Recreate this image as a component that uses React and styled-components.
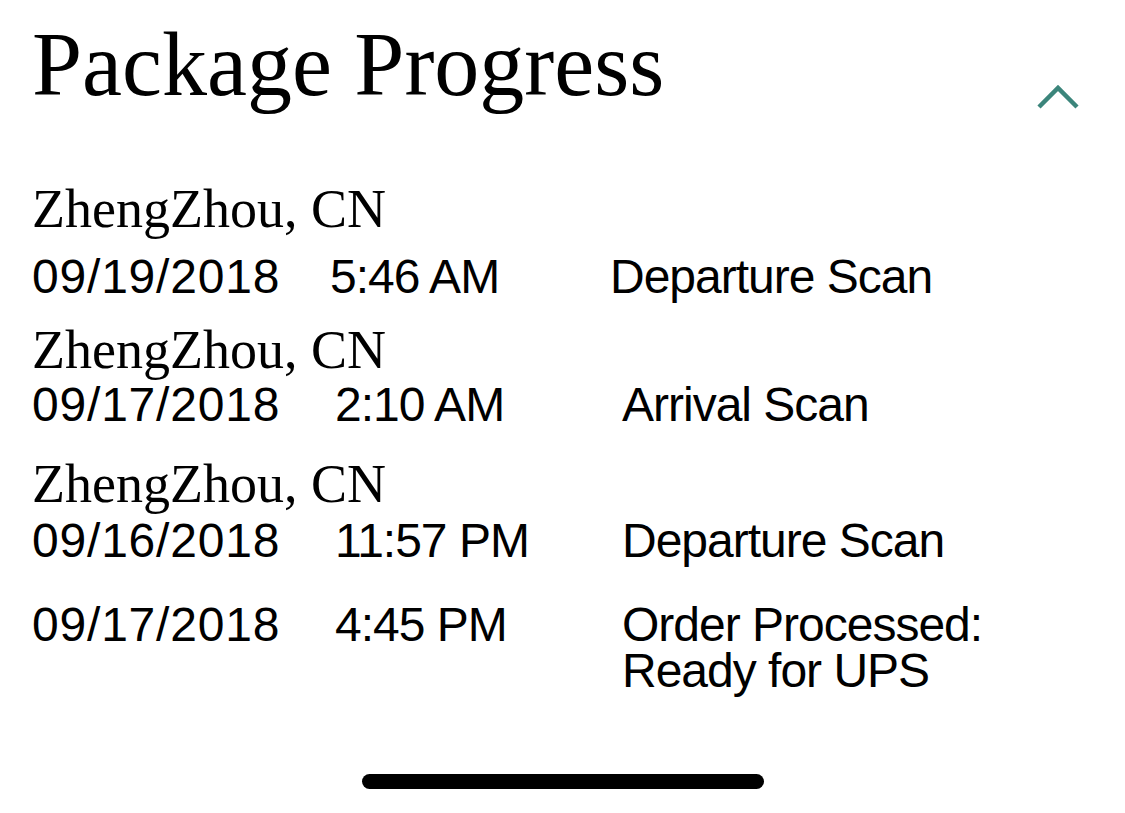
import React from 'react';
import styled, { createGlobalStyle } from 'styled-components';

const GlobalStyle = createGlobalStyle`
  html, body {
    margin: 0;
    padding: 0;
    background: #ffffff;
  }
  body {
    font-family: 'Liberation Sans', Arial, sans-serif;
    color: #000000;
  }
`;

const Screen = styled.div`
  display: flex;
  flex-direction: column;
  min-height: 813px;
  box-sizing: border-box;
  padding-bottom: 24px;
`;

const Header = styled.header`
  display: flex;
  justify-content: space-between;
  align-items: flex-start;
  padding: 0 44px 0 32px;
`;

const Title = styled.h1`
  margin: 20px 0 0 0;
  font-family: 'Liberation Serif', 'Times New Roman', serif;
  font-weight: 400;
  font-size: 90px;
  line-height: 90px;
`;

const Toggle = styled.button`
  display: flex;
  margin-top: 82px;
  padding: 0;
  border: 0;
  background: none;
  cursor: pointer;
`;

const Entries = styled.section`
  display: flex;
  flex-direction: column;
  margin-top: 69px;
  padding: 0 32px;
`;

const Entry = styled.div`
  display: flex;
  flex-direction: column;
  margin-top: ${(p) => p.$top}px;
`;

const City = styled.div`
  font-family: 'Liberation Serif', 'Times New Roman', serif;
  font-size: 54px;
  line-height: 56px;
  margin-bottom: ${(p) => p.$gap}px;
`;

const Row = styled.div`
  display: grid;
  grid-template-columns: ${(p) => p.$date}px ${(p) => p.$time}px 1fr;
  font-size: 48px;
  line-height: 46px;
`;

const Cell = styled.div`
  white-space: pre-line;
  letter-spacing: ${(p) => p.$spacing || 0}px;
`;

const HomeBar = styled.div`
  align-self: center;
  width: 402px;
  height: 15px;
  margin-top: auto;
  border-radius: 8px;
  background: #000000;
`;

const entries = [
  { city: 'ZhengZhou, CN', top: 0, gap: 17, date: '09/19/2018', time: '5:46 AM', status: 'Departure Scan', cols: [298, 280] },
  { city: 'ZhengZhou, CN', top: 22, gap: 4, date: '09/17/2018', time: '2:10 AM', status: 'Arrival Scan', cols: [303, 287] },
  { city: 'ZhengZhou, CN', top: 28, gap: 6, date: '09/16/2018', time: '11:57 PM', status: 'Departure Scan', cols: [303, 287] },
  { top: 38, date: '09/17/2018', time: '4:45 PM', status: 'Order Processed:\nReady for UPS', cols: [303, 287] },
];

function ChevronUp() {
  return (
    <svg width="46" height="30" viewBox="0 0 46 30" fill="none">
      <path d="M4 25 L23 6 L42 25" stroke="#3b857b" strokeWidth="4.5" />
    </svg>
  );
}

export default function App() {
  return (
    <Screen>
      <GlobalStyle />
      <Header>
        <Title>Package Progress</Title>
        <Toggle aria-label="Collapse">
          <ChevronUp />
        </Toggle>
      </Header>
      <Entries>
        {entries.map((e, i) => (
          <Entry key={i} $top={e.top}>
            {e.city && <City $gap={e.gap}>{e.city}</City>}
            <Row $date={e.cols[0]} $time={e.cols[1]}>
              <Cell $spacing={0.8}>{e.date}</Cell>
              <Cell $spacing={-1}>{e.time}</Cell>
              <Cell $spacing={-1}>{e.status}</Cell>
            </Row>
          </Entry>
        ))}
      </Entries>
      <HomeBar />
    </Screen>
  );
}
